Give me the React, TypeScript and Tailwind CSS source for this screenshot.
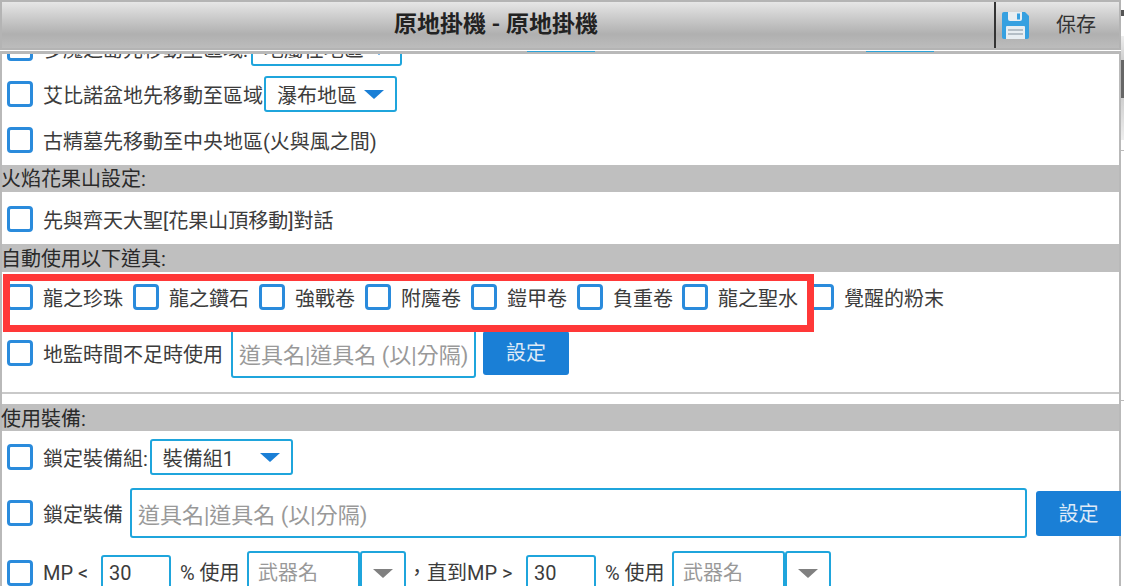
import React from 'react'

const font = "font-['Roboto','Noto_Sans_CJK_TC',sans-serif]"

const Check = () => (
    <span className="block w-[26px] h-[26px] shrink-0 rounded-[4px] border-[3px] border-[#2a8bdc] bg-white"></span>
)

const Label = ({ text, className = 'ml-[10px]' }: { text: string; className?: string }) => (
    <span className={`pt-[3px] ${className}`}>{text}</span>
)

const Caret = ({ color = 'border-t-[#1a7fd6]', className = '' }: { color?: string; className?: string }) => (
    <span className={`block w-0 h-0 border-x-[10px] border-x-transparent border-t-[9px] ${color} ${className}`}></span>
)

const Section = ({ title, className = '' }: { title: string; className?: string }) => (
    <div className={`bg-[#bfbfbf] indent-[-1px] text-[20px] text-[#2a2a2a] ${className}`}>{title}</div>
)

const Select = ({ text, className = '', caret = '' }: { text: string; className?: string; caret?: string }) => (
    <div className={`flex h-[36px] shrink-0 items-center justify-between rounded-[3px] border-2 border-[#1fa5dc] bg-white pl-[11px] pr-[11px] ${className}`}>
        <Label text={text} className="" />
        <Caret className={caret} />
    </div>
)

const Field = ({ text, className = '' }: { text: string; className?: string }) => (
    <div className={`flex shrink-0 items-center rounded-[3px] border-2 border-[#1fa5dc] bg-white pl-[6px] pt-[4px] text-[22px] text-[#999] ${className}`}>{text}</div>
)

const Weapon = ({ w }: { w: string }) => (
    <>
        <div className={`flex h-[44px] shrink-0 items-center rounded-[3px] border-2 border-[#1fa5dc] bg-white pl-[9px] text-[#999] ${w}`}>武器名</div>
        <div className="flex h-[44px] w-[46px] shrink-0 items-center justify-center rounded-[3px] border-2 border-[#1fa5dc] bg-white">
            <Caret color="border-t-[#808080]" />
        </div>
    </>
)

const items = [
    { name: '龍之珍珠', w: 'w-[126px]' },
    { name: '龍之鑽石', w: 'w-[126px]' },
    { name: '強戰卷', w: 'w-[106px]' },
    { name: '附魔卷', w: 'w-[106px]' },
    { name: '鎧甲卷', w: 'w-[106px]' },
    { name: '負重卷', w: 'w-[105px]' },
    { name: '龍之聖水', w: 'w-[126px]' },
    { name: '覺醒的粉末', w: 'w-[140px]' },
]

export default function App() {
    return (
        <div className={`${font} relative h-[586px] w-[1124px] overflow-hidden bg-white text-[20px] text-[#3c3c3c]`}>
            <div className="w-[1121px]">
                <header className="flex h-[50px] border-2 border-[#b4b4b4] bg-gradient-to-b from-[#e6e6e6] via-[#b0b0b0] via-70% to-[#bcbcbc]">
                    <h1 className="flex-1 pr-[4px] text-center text-[23px] leading-[46px] font-semibold text-[#222]">原地掛機 - 原地掛機</h1>
                    <div className="flex items-center w-[125px] border-l-2 border-[#333]">
                        <svg width="27" height="27" viewBox="0 0 27 27" className="ml-[6px]">
                            <path d="M2 0h21l4 4v21a2 2 0 0 1-2 2H2a2 2 0 0 1-2-2V2a2 2 0 0 1 2-2z" fill="#36a0e0" />
                            <path d="M6 0h14v7a2 2 0 0 1-2 2H8a2 2 0 0 1-2-2z" fill="#e8eef2" />
                            <rect x="15" y="1.500" width="3" height="6" fill="#36a0e0" />
                            <path d="M4 15a1 1 0 0 1 1-1h17a1 1 0 0 1 1 1v12H4z" fill="#e8eef2" />
                            <rect x="6" y="17" width="15" height="2" fill="#b4bec6" />
                            <rect x="6" y="21" width="15" height="2" fill="#b4bec6" />
                        </svg>
                        <span className="ml-[27px] text-[#333]">保存</span>
                    </div>
                </header>
                <div className="mt-[1px] h-[3px] bg-[#b9b9b9]"></div>

                <main className="h-[532px] border-x-2 border-[#b9b9b9]">
                    <div className="h-[12px] overflow-hidden">
                        <div className="mt-[-24px] flex h-[36px] items-center pl-[5px]">
                            <Check />
                            <Label text="多魔之島先移動至區域:" />
                            <Select text="地屬性地區" className="ml-[3px] w-[151px]" caret="mt-[5px]" />
                        </div>
                    </div>

                    <div className="mt-[10px] flex h-[36px] items-center pl-[5px]">
                        <Check />
                        <Label text="艾比諾盆地先移動至區域" />
                        <Select text="瀑布地區" className="ml-[1px] w-[133px]" />
                    </div>

                    <div className="mt-[15px] flex h-[26px] items-center pl-[5px]">
                        <Check />
                        <Label text="古精墓先移動至中央地區(火與風之間)" />
                    </div>

                    <Section title="火焰花果山設定:" className="mt-[12px] h-[27px] leading-[29px]" />

                    <div className="mt-[14px] flex h-[26px] items-center pl-[5px]">
                        <Check />
                        <Label text="先與齊天大聖[花果山頂移動]對話" />
                    </div>

                    <Section title="自動使用以下道具:" className="mt-[12px] h-[28px] leading-[30px]" />

                    <div className="mt-[12px] flex h-[26px] items-center pl-[5px]">
                        {items.map((item) => (
                            <div key={item.name} className={`flex shrink-0 items-center ${item.w}`}>
                                <Check />
                                <span className="ml-[10px] pt-[4px]">{item.name}</span>
                            </div>
                        ))}
                    </div>

                    <div className="mt-[18px] flex h-[50px] items-center pl-[5px]">
                        <Check />
                        <span className="ml-[10px] pt-[4px]">地監時間不足時使用</span>
                        <Field text="道具名|道具名 (以|分隔)" className="ml-[8px] h-[50px] w-[245px]" />
                        <button className="ml-[7px] h-[44px] w-[86px] rounded-[3px] bg-[#1a7fd6] text-[#dfeaf6]">設定</button>
                    </div>

                    <div className="mt-[14px] h-[2px] bg-[#c9c9c9]"></div>
                    <Section title="使用裝備:" className="mt-[10px] h-[27px] leading-[31px]" />

                    <div className="mt-[8px] flex h-[36px] items-center pl-[5px]">
                        <Check />
                        <Label text="鎖定裝備組:" />
                        <Select text="裝備組1" className="ml-[2px] w-[143px]" />
                    </div>

                    <div className="mt-[13px] flex h-[50px] items-center pl-[5px]">
                        <Check />
                        <Label text="鎖定裝備" />
                        <Field text="道具名|道具名 (以|分隔)" className="ml-[7px] h-[50px] w-[897px]" />
                        <button className="ml-[9px] mr-[-2px] h-[45px] w-[85px] shrink-0 rounded-l-[3px] bg-[#1a7fd6] pt-[2px] text-[#dfeaf6]">設定</button>
                    </div>

                    <div className="mt-[13px] flex h-[44px] items-center pl-[5px]">
                        <Check />
                        <span className="ml-[10px] w-[58px] shrink-0">MP &lt;</span>
                        <div className="flex h-[36px] w-[70px] shrink-0 items-center rounded-[3px] border-2 border-[#1fa5dc] pl-[6px]">30</div>
                        <span className="ml-[9px] w-[67px] shrink-0">% 使用</span>
                        <Weapon w="w-[113px]" />
                        <span className="w-[120px] shrink-0 pl-[1px]">，直到MP &gt;</span>
                        <div className="flex h-[36px] w-[70px] shrink-0 items-center rounded-[3px] border-2 border-[#1fa5dc] pl-[6px]">30</div>
                        <span className="ml-[9px] w-[67px] shrink-0">% 使用</span>
                        <Weapon w="w-[113px]" />
                    </div>
                </main>
            </div>

            {/* edges of the buttons hidden under the title bar */}
            <div className="absolute left-[527px] top-[51px] h-[1px] w-[68px] bg-[#2ea3d8]"></div>
            <div className="absolute left-[866px] top-[51px] h-[1px] w-[68px] bg-[#2ea3d8]"></div>

            {/* highlight drawn over the screenshot */}
            <div className="absolute left-[3px] top-[274px] h-[58px] w-[811px] border-[7px] border-[#ff3838]"></div>

            {/* sliver of the window behind */}
            <div className="absolute right-0 top-[10px] h-[6px] w-[3px] bg-[#555]"></div>
            <div className="absolute right-0 top-[36px] h-[24px] w-[3px] bg-gradient-to-b from-[#eee] to-[#cfcfcf]"></div>
            <div className="absolute right-0 top-[60px] h-[38px] w-[3px] bg-[#666]"></div>
            <div className="absolute right-0 top-[98px] h-[42px] w-[3px] bg-gradient-to-b from-[#cfcfcf] to-[#eee]"></div>
            <div className="absolute right-0 top-[150px] h-[1px] w-[3px] bg-[#bbb]"></div>
            <div className="absolute right-0 top-[400px] h-[1px] w-[3px] bg-[#bbb]"></div>
        </div>
    )
}
